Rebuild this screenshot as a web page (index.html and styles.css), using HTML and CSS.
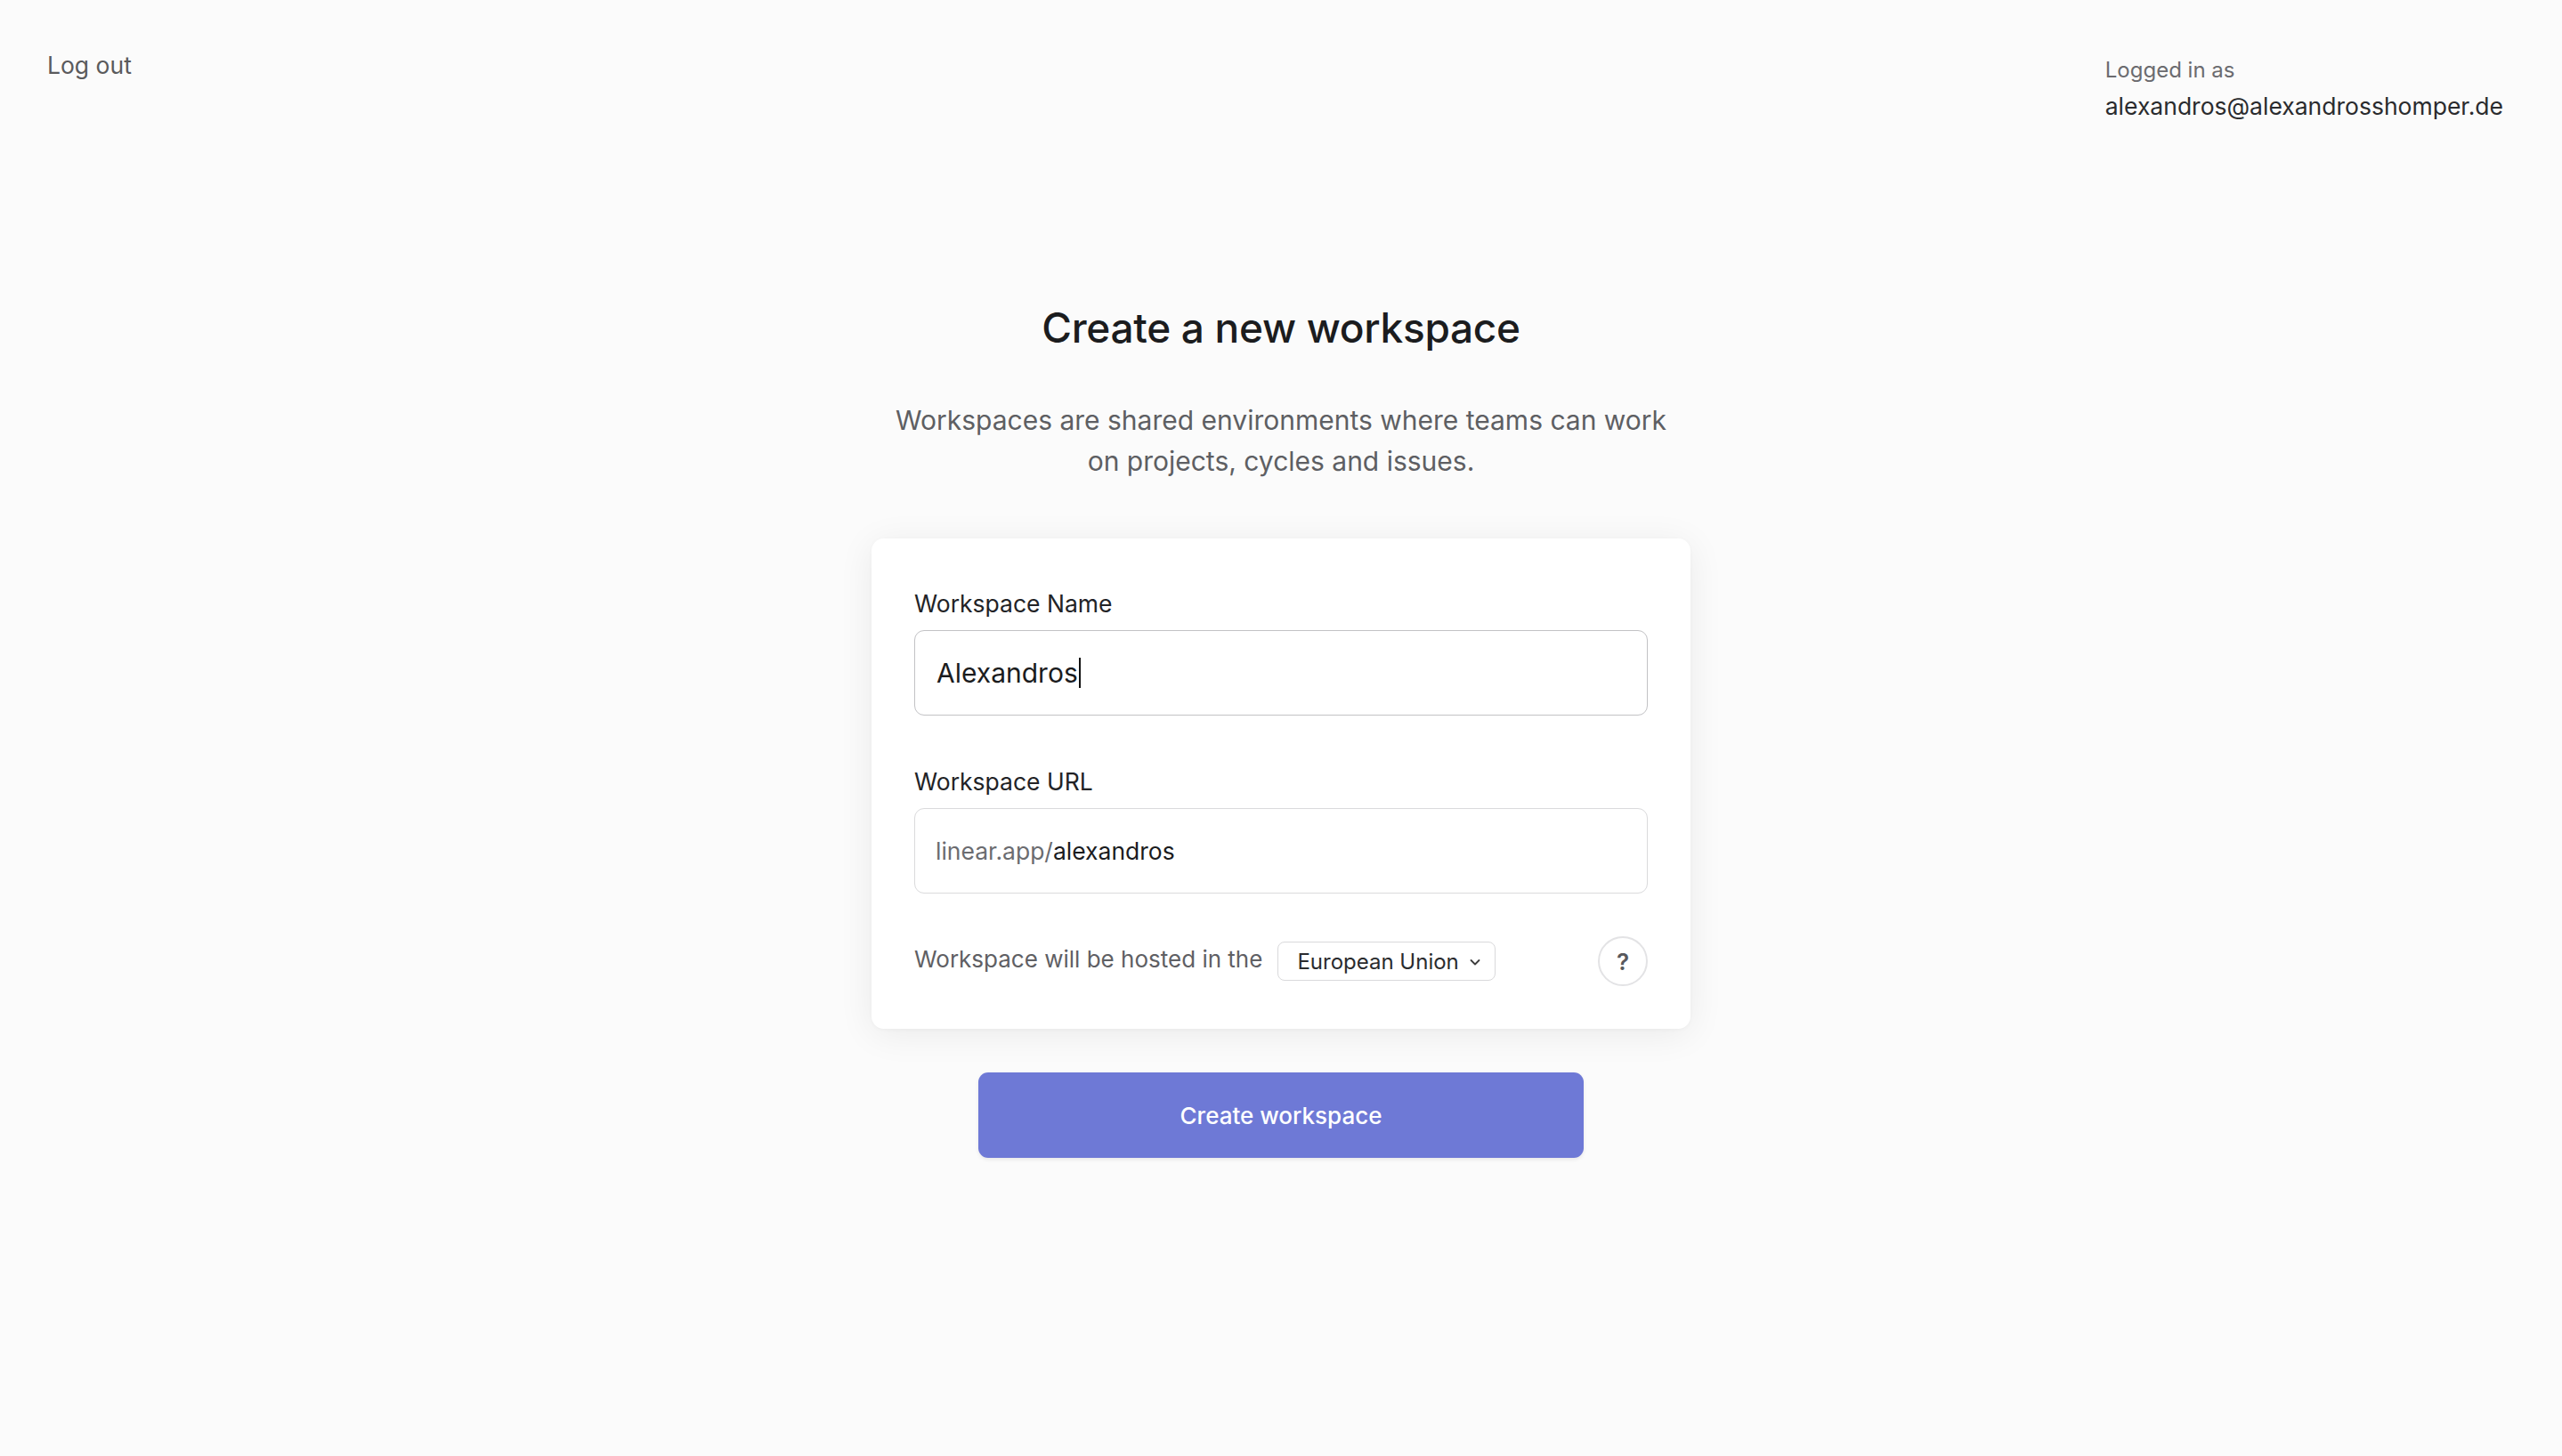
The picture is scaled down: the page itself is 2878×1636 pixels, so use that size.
FILE: index.html
```html
<!DOCTYPE html>
<html lang="en">
<head>
<meta charset="utf-8">
<title>Create a new workspace</title>
<link rel="stylesheet" href="styles.css">
</head>
<body>
<header class="topbar">
  <a class="logout" href="#">Log out</a>
  <div class="account">
    <div class="account-label">Logged in as</div>
    <div class="account-email">alexandros@alexandrosshomper.de</div>
  </div>
</header>
<main class="main">
  <h1 class="title">Create a new workspace</h1>
  <p class="subtitle">Workspaces are shared environments where teams can work<br>on projects, cycles and issues.</p>
  <section class="card">
    <div class="field">
      <label class="field-label">Workspace Name</label>
      <div class="input input-focus"><span class="input-text">Alexandros</span><span class="caret"></span></div>
    </div>
    <div class="field">
      <label class="field-label">Workspace URL</label>
      <div class="input input-url"><span class="url-prefix">linear.app/</span><span class="url-slug">alexandros</span></div>
    </div>
    <div class="hosting">
      <span class="hosting-text">Workspace will be hosted in the</span>
      <button class="select" type="button">European Union
        <svg class="chevron" viewBox="0 0 16 16" width="16" height="16"><polyline points="3.5,6 8,10.5 12.5,6" fill="none" stroke="#3c3c3c" stroke-width="1.8" stroke-linecap="round" stroke-linejoin="round"/></svg>
      </button>
      <span class="spacer"></span>
      <button class="help" type="button">?</button>
    </div>
  </section>
  <button class="primary" type="button">Create workspace</button>
</main>
</body>
</html>
```
FILE: styles.css
```css
* { box-sizing: border-box; }
html, body { margin: 0; padding: 0; }
body {
  background: #fbfbfb;
  font-family: Inter, "Noto Sans", sans-serif;
  color: #1f2023;
  min-height: 1636px;
}
.topbar {
  display: flex;
  justify-content: space-between;
  align-items: flex-start;
  padding: 57px 66px 0 53px;
}
.logout {
  font-size: 26.5px;
  line-height: 32px;
  color: #5a5a5c;
  text-decoration: none;
}
.account {
  display: flex;
  flex-direction: column;
  padding-top: 6px;
}
.account-label {
  font-size: 24px;
  line-height: 32px;
  color: #6b6b6f;
}
.account-email {
  font-size: 26.5px;
  line-height: 32px;
  margin-top: 8px;
  color: #2a2b2e;
}
.main {
  display: flex;
  flex-direction: column;
  align-items: center;
  padding-top: 205px;
}
.title {
  margin: 0;
  font-size: 46px;
  line-height: 56px;
  font-weight: 500;
  color: #1b1c1e;
  letter-spacing: -0.3px;
}
.subtitle {
  margin: 53px 0 0;
  font-size: 30px;
  line-height: 46px;
  text-align: center;
  color: #5e5f63;
}
.card {
  margin-top: 64px;
  width: 920px;
  background: #fff;
  border-radius: 14px;
  box-shadow: 0 6px 40px rgba(0, 0, 0, 0.07), 0 1px 4px rgba(0, 0, 0, 0.03);
  padding: 57px 48px 48px;
  display: flex;
  flex-direction: column;
}
.field {
  display: flex;
  flex-direction: column;
  gap: 14px;
  margin-bottom: 58px;
}
.field + .field { margin-bottom: 48px; }
.field-label {
  font-size: 26.5px;
  line-height: 32px;
  color: #222326;
  font-weight: 400;
}
.input {
  height: 96px;
  border: 1.5px solid #dadadc;
  border-radius: 11px;
  display: flex;
  align-items: center;
  padding: 0 24px;
  background: #fff;
}
.input-focus { border-color: #c2c2c5; }
.input-text {
  font-size: 30px;
  color: #1b1c1e;
}
.caret {
  width: 2px;
  height: 34px;
  background: #111;
  margin-left: 1px;
}
.input-url { font-size: 26.5px; padding-left: 23px; }
.url-prefix { color: #6b6c70; }
.url-slug { color: #1b1c1e; }
.hosting {
  display: flex;
  align-items: center;
  height: 56px;
}
.hosting-text {
  font-size: 26px;
  color: #5f6064;
  padding-bottom: 5px;
}
.select {
  margin-left: 17px;
  height: 44px;
  padding: 0 14px 0 21px;
  border: 1.5px solid #d9d9db;
  border-radius: 8px;
  background: #fff;
  font-family: Inter, "Noto Sans", sans-serif;
  font-size: 24px;
  color: #2a2b2e;
  display: flex;
  align-items: center;
  gap: 10px;
}
.chevron { width: 16px; height: 16px; margin-top: 2px; }
.spacer { flex: 1; }
.help {
  width: 56px;
  height: 56px;
  border-radius: 50%;
  border: 2px solid #e3e3e5;
  background: #fff;
  font-family: Inter, "Noto Sans", sans-serif;
  font-size: 26px;
  font-weight: 600;
  color: #58595d;
  display: flex;
  align-items: center;
  justify-content: center;
  padding: 0;
}
.primary {
  margin-top: 49px;
  width: 680px;
  height: 96px;
  border: none;
  border-radius: 11px;
  background: #6e79d6;
  color: #fff;
  font-family: Inter, "Noto Sans", sans-serif;
  font-size: 26px;
  font-weight: 500;
  box-shadow: 0 2px 4px rgba(0, 0, 0, 0.08);
}
```
